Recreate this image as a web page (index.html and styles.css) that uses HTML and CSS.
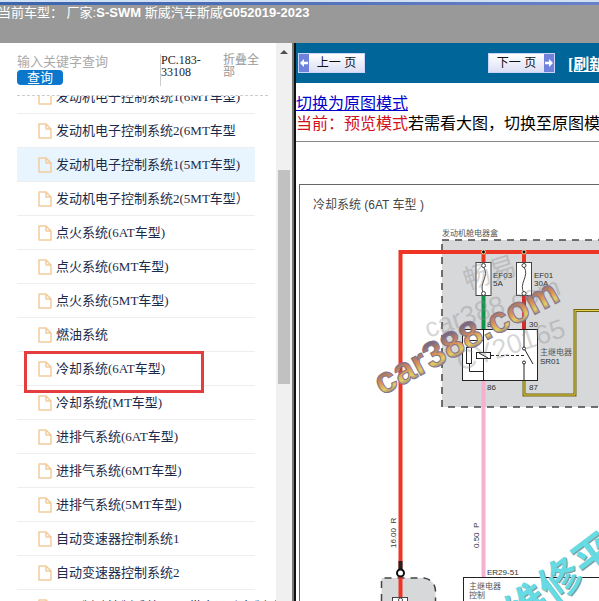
FILE: index.html
```html
<!DOCTYPE html>
<html lang="zh-CN">
<head>
    <meta charset="UTF-8">
    <meta name="viewport" content="width=device-width, initial-scale=1.0">
    <title>冷却系统(6AT车型)</title>
    <link rel="stylesheet" href="styles.css">
</head>
<body>
    <header class="top-bar">
        <div class="model">当前车型： 厂家:<b>S-SWM</b> 斯威汽车斯威<b>G052019-2023</b></div>
    </header>

    <div class="frames">
        <aside class="sidebar">
            <div class="side-body">
                <form class="search">
                    <div class="search-box">
                        <input type="text" class="keyword" aria-label="关键字" placeholder="输入关键字查询">
                        <button type="button" class="query">查询</button>
                    </div>
                    <div class="code">PC.183-33108</div>
                    <a href="#" class="fold">折叠全部</a>
                </form>
                <div class="tree-wrap">
                    <ul class="tree" id="tree"></ul>
                </div>
            </div>
            <div class="scrollbar">
                <div class="scroll-up"></div>
                <div class="scroll-thumb"></div>
            </div>
        </aside>

        <main class="content">
            <nav class="toolbar">
                <button type="button" class="page-btn">
                    <span class="arrow"><svg width="8" height="8" viewBox="0 0 9 9"><path d="M0 4.500L4.500 0V3H9V6H4.500V9Z" fill="#fff"/></svg></span>
                    <span class="page-text">上一 页</span>
                </button>
                <button type="button" class="page-btn next">
                    <span class="page-text">下一 页</span>
                    <span class="arrow"><svg width="8" height="8" viewBox="0 0 9 9"><path d="M9 4.500L4.500 0V3H0V6H4.500V9Z" fill="#fff"/></svg></span>
                </button>
                <a href="#" class="refresh">[刷新]</a>
            </nav>

            <div class="mode">
                <a href="#">切换为原图模式</a><br>
                <span class="current">当前：预览模式</span>若需看大图，切换至原图模式
            </div>
            <hr class="line">

            <svg class="diagram" width="620" height="440" viewBox="296 184 620 440">
                <rect x="299.500" y="184.500" width="600" height="600" fill="#fff" stroke="#666"/>
                <text x="313" y="209" class="title">冷却系统 (6AT 车型 )</text>
                <text x="442" y="236" class="cn">发动机舱电器盒</text>

                <!-- 电器盒 -->
                <rect x="442" y="240" width="300" height="167" fill="#d6d8da" stroke="#444" stroke-width="1.500" stroke-dasharray="7 6"/>
                <path d="M400.500 576V252H700" fill="none" stroke="#ee3524" stroke-width="4"/>
                <path d="M483.500 252V263M524 252V263" stroke="#ee3524" stroke-width="4"/>
                <path d="M483.500 296V330" stroke="#12944c" stroke-width="4"/>
                <path d="M524 296V330" stroke="#d52b2b" stroke-width="4"/>
                <path d="M483.500 381V577" stroke="#f4b0d0" stroke-width="4"/>
                <path d="M524 381V395H575V310.500H620" fill="none" stroke="#71620f" stroke-width="3"/>
                <path d="M524 381V395H575V310.500H620" fill="none" stroke="#e5d24a" stroke-width="1"/>
                <g fill="#111" stroke="#e9d5a0" stroke-width="1">
                    <circle cx="483.500" cy="252" r="2"/>
                    <circle cx="524" cy="252" r="2"/>
                </g>

                <!-- 保险丝 -->
                <g fill="#fff" stroke="#444">
                    <rect x="476" y="262.500" width="15" height="33"/>
                    <rect x="516.500" y="262.500" width="15" height="33"/>
                    <path d="M483.500 267C490 276 478 284 483.500 293M524 267C530 276 518 284 524 293" fill="none"/>
                    <circle cx="483.500" cy="265.500" r="2"/>
                    <circle cx="483.500" cy="293.500" r="2"/>
                    <circle cx="524" cy="265.500" r="2"/>
                    <circle cx="524" cy="293.500" r="2"/>
                </g>
                <g class="small">
                    <text x="493" y="278">EF03</text>
                    <text x="493" y="286">5A</text>
                    <text x="534" y="278">EF01</text>
                    <text x="534" y="286">30A</text>
                    <text x="487" y="327">85</text>
                    <text x="529" y="327">30</text>
                </g>

                <!-- 主继电器 -->
                <rect x="462.500" y="329.500" width="75" height="51" fill="#fff" stroke="#222"/>
                <g fill="none" stroke="#222">
                    <path d="M483.500 330V381M483.500 340.500H469.500V347M469.500 364V371.500H483.500"/>
                    <rect x="466.500" y="347.500" width="5" height="16" fill="#fff"/>
                    <rect x="476.500" y="352.500" width="14" height="6" fill="#fff"/>
                    <path d="M479 353L488 358"/>
                    <path d="M491 355.500H524" stroke-dasharray="3 2"/>
                    <path d="M524 330V347M525 350L533 364M524 364V381"/>
                    <circle cx="524" cy="348.500" r="1.500" fill="#fff"/>
                    <circle cx="524" cy="362.500" r="1.500" fill="#fff"/>
                </g>
                <text x="540" y="355" class="cn">主继电器</text>
                <g class="small">
                    <text x="540" y="364">SR01</text>
                    <text x="487" y="390">86</text>
                    <text x="529" y="390">87</text>
                    <text x="487" y="575">ER29-51</text>
                    <text transform="translate(396 548) rotate(-90)">16.00&#160; R</text>
                    <text transform="translate(479 548) rotate(-90)">0.50&#160; P</text>
                </g>

                <!-- 下方连接器 -->
                <path d="M381.500 640V578H424Q435.500 580 435.500 592V640" fill="#d6d8da" stroke="#444" stroke-width="1.500" stroke-dasharray="7 6"/>
                <path d="M400.500 576V598" stroke="#ee3524" stroke-width="4"/>
                <path d="M400.500 561V570" stroke="#222" stroke-width="4"/>
                <circle cx="400.500" cy="573" r="3.500" fill="#fff" stroke="#111" stroke-width="2"/>
                <rect x="392.500" y="597.500" width="15" height="30" fill="#fff" stroke="#444"/>
                <circle cx="400.500" cy="600" r="2" fill="#fff" stroke="#444"/>
                <rect x="463.500" y="577.500" width="300" height="60" fill="#fff" stroke="#222"/>
                <text x="469" y="589" class="cn">主继电器</text>
                <text x="469" y="598" class="cn">控制</text>

                <!-- 水印 -->
                <g class="mark-gray">
                    <text transform="translate(467 290) rotate(-18)">畅易</text>
                    <text transform="translate(428 338) rotate(-18)">car388.com</text>
                    <text transform="translate(460 371) rotate(-18)">CY20165</text>
                </g>
                <defs>
                    <linearGradient id="gold" x1="0" y1="0" x2="0" y2="1">
                        <stop offset="0.200" stop-color="#74657f"/>
                        <stop offset="0.500" stop-color="#d98e55"/>
                        <stop offset="0.700" stop-color="#e3cf63"/>
                        <stop offset="0.900" stop-color="#74518a"/>
                    </linearGradient>
                </defs>
                <text transform="translate(382 396) rotate(-28)" class="mark-gold">car388.com</text>
                <text transform="translate(520 631) rotate(-37)" class="mark-shadow">维修平台</text>
                <text transform="translate(519 630) rotate(-37)" class="mark-blue">维修平台</text>
            </svg>
        </main>
    </div>

    <script>
        const items = [
            '发动机电子控制系统1(6MT车型)',
            '发动机电子控制系统2(6MT车型',
            '发动机电子控制系统1(5MT车型)',
            '发动机电子控制系统2(5MT车型）',
            '点火系统(6AT车型)',
            '点火系统(6MT车型)',
            '点火系统(5MT车型)',
            '燃油系统',
            '冷却系统(6AT车型)',
            '冷却系统(MT车型)',
            '进排气系统(6AT车型)',
            '进排气系统(6MT车型)',
            '进排气系统(5MT车型)',
            '自动变速器控制系统1',
            '自动变速器控制系统2',
            'ABS制动控制系统(ESP 带电子驻车制动)'
        ];
        const icon = '<svg class="file" width="14" height="16" viewBox="0 0 14 16"><path d="M1 1H8L13 6V15H1ZM8 1V6H13"/></svg>';

        document.getElementById('tree').innerHTML = items.map((name, i) => {
            const cls = i === 2 ? 'item hover' : i === 8 ? 'item marked' : 'item';
            return `<li class="${cls}">${icon}<a href="#">${name}</a></li>`;
        }).join('');
    </script>
</body>
</html>
```
FILE: styles.css
```css
*,
*::before,
*::after {
    box-sizing: border-box;
}
body {
    margin: 0;
    height: 100vh;
    display: flex;
    flex-direction: column;
    overflow: hidden;
    background: #fff;
    font-family: "Liberation Serif", "Noto Sans CJK SC", serif;
}
a {
    color: inherit;
    text-decoration: none;
}
.top-bar {
    flex: none;
    height: 43px;
    background: #999;
    color: #fff;
    font: 13px/16px "Liberation Sans", "Noto Sans CJK SC", sans-serif;
    white-space: nowrap;
}
.top-bar::before {
    content: "";
    display: block;
    height: 5px;
    border-top: 2px solid #cfe0f2;
    background: linear-gradient(90deg, #3a64ac, #6a80cc);
}
.model {
    margin-left: -2px;
}
.frames {
    flex: 1;
    min-height: 0;
    display: flex;
}

/* 左侧目录 */
.sidebar {
    flex: none;
    width: 296px;
    display: flex;
    border-right: 2px solid #111;
    box-shadow: inset -2px 0 #777;
}
.side-body {
    flex: 1;
    min-width: 0;
    padding-left: 17px;
    display: flex;
    flex-direction: column;
}
.search {
    flex: none;
    height: 53px;
    margin-right: 8px;
    padding-top: 11px;
    display: flex;
    align-items: flex-start;
    border-bottom: 1px dashed #ccc;
}
.search-box {
    width: 143px;
    display: flex;
    flex-direction: column;
    align-items: flex-start;
}
.keyword {
    width: 100%;
    height: 16px;
    border: 0;
    padding: 0;
    outline: 0;
    font: 13px/16px "Liberation Sans", "Noto Sans CJK SC", sans-serif;
}
.keyword::placeholder {
    color: #aaa;
}
.query {
    width: 46px;
    height: 15px;
    border: 0;
    border-radius: 4px;
    padding: 0;
    background: #0a76cc;
    color: #fff;
    font: 13px/14px "Liberation Sans", "Noto Sans CJK SC", sans-serif;
}
.code {
    width: 63px;
    height: 32px;
    padding-right: 10px;
    border-left: 1px solid #ccc;
    color: #222;
    font-size: 12px;
    line-height: 12px;
}
.fold {
    width: 37px;
    color: #999;
    font-size: 12px;
    line-height: 12px;
}
.tree-wrap {
    flex: 1;
    min-height: 0;
    overflow: hidden;
}
.tree {
    list-style: none;
    margin: -16px 0 0;
    padding: 0;
}
.item {
    position: relative;
    height: 34px;
    margin-right: 21px;
    padding-left: 21px;
    display: flex;
    align-items: center;
    gap: 4px;
    border-bottom: 1px solid #eee;
    color: #1c2b4a;
    font-size: 13px;
    line-height: 20px;
    white-space: nowrap;
}
.hover {
    background: #e8f5fe;
}
.file {
    flex: none;
    fill: none;
    stroke: #f2cb9c;
    stroke-width: 1.5;
    stroke-linejoin: round;
}
.marked::after {
    content: "";
    position: absolute;
    left: 7px;
    top: -1px;
    width: 180px;
    height: 42px;
    border: 3px solid #e33d3f;
    z-index: 1;
}
.scrollbar {
    flex: none;
    width: 16px;
    margin-right: 2px;
    padding: 7px 2px 0;
    background: #f0f0f0;
}
.scroll-up {
    width: 8px;
    height: 4px;
    margin: 0 auto 116px;
    background: #505050;
    clip-path: polygon(50% 0, 100% 100%, 0 100%);
}
.scroll-thumb {
    height: 214px;
    background: #c1c1c1;
}

/* 右侧内容 */
.content {
    flex: 1;
    min-width: 0;
    overflow: hidden;
}
.toolbar {
    height: 40px;
    padding-left: 2px;
    display: flex;
    align-items: center;
    background: #069;
    color: #fff;
    white-space: nowrap;
}
.page-btn {
    flex: none;
    width: 67px;
    height: 20px;
    padding: 0;
    display: flex;
    border: 1px solid #c9d4ff;
    background: linear-gradient(#fff, #dcdff5);
    color: #111;
    font: 12px/18px "Liberation Sans", "Noto Sans CJK SC", sans-serif;
}
.arrow {
    width: 10px;
    height: 18px;
    display: flex;
    align-items: center;
    justify-content: center;
    background: #6f83dc;
}
.page-text {
    flex: 1;
}
.next {
    margin-left: 123px;
}
.refresh {
    margin-left: 13px;
    font-size: 16px;
    font-weight: bold;
    text-decoration: underline;
}
.mode {
    padding-top: 11px;
    font-size: 16px;
    line-height: 20px;
    white-space: nowrap;
}
.mode a {
    color: #00c;
    text-decoration: underline;
}
.current {
    color: #d0111b;
}
.line {
    margin: 7px 0 42px;
    border: 0;
    border-top: 1px solid #888;
}
.diagram {
    display: block;
    font-family: "Liberation Sans", "Noto Sans CJK SC", sans-serif;
}
.title {
    font-size: 12px;
    fill: #444;
}
.cn {
    font-size: 8px;
    fill: #555;
}
.small {
    font-size: 8px;
    fill: #333;
}
.mark-gray {
    font-size: 27px;
    fill: #888;
    fill-opacity: 0.35;
}
.mark-gold {
    font-size: 37px;
    font-weight: bold;
    fill: url(#gold);
    stroke: #85738c;
    stroke-width: 1;
}
.mark-shadow,
.mark-blue {
    font-size: 42px;
    font-weight: bold;
    fill: #8b9599;
}
.mark-blue {
    fill: #66dbe3;
}
```
